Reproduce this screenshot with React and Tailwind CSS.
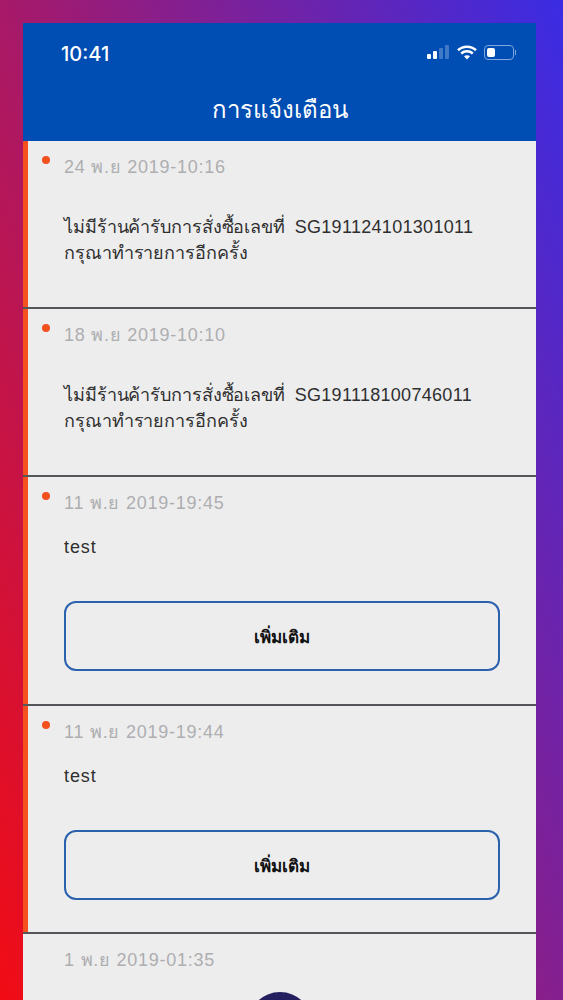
const items = [
  {
    date: "24 พ.ย 2019-10:16",
    lines: ["ไม่มีร้านค้ารับการสั่งซื้อเลขที่  ", "กรุณาทำรายการอีกครั้ง"],
    code: "SG191124101301011",
    unread: true,
    h: "h-[168px]",
  },
  {
    date: "18 พ.ย 2019-10:10",
    lines: ["ไม่มีร้านค้ารับการสั่งซื้อเลขที่  ", "กรุณาทำรายการอีกครั้ง"],
    code: "SG191118100746011",
    unread: true,
    h: "h-[168px]",
  },
  { date: "11 พ.ย 2019-19:45", lines: ["test"], unread: true, more: true, h: "h-[229px]" },
  { date: "11 พ.ย 2019-19:44", lines: ["test"], unread: true, more: true, h: "h-[228px]" },
  { date: "1 พ.ย 2019-01:35", lines: ["ยินดีต้อนรับ"], h: "h-[168px]" },
];

function StatusIcons() {
  return (
    <div className="flex items-center gap-[6px] -mt-[2px]">
      <svg width="24" height="15" viewBox="0 0 24 15" fill="#fff">
        <rect x="0" y="9" width="4" height="5" rx="1" />
        <rect x="6" y="6" width="4" height="8" rx="1" />
        <rect x="12" y="3" width="4" height="11" rx="1" fillOpacity="0.25" />
        <rect x="18" y="0" width="4" height="14" rx="1" fillOpacity="0.25" />
      </svg>
      <svg width="20" height="15" viewBox="0 0 20 15" fill="none" stroke="#fff" strokeWidth="2.6">
        <path d="M1 5.2C6 .6 14 .6 19 5.2" />
        <path d="M4.2 8.4c3.2-2.8 8.4-2.8 11.6 0" />
        <path d="M10 14.5 7 11.3c1.7-1.4 4.3-1.4 6 0z" fill="#fff" stroke="none" />
      </svg>
      <div className="flex items-center ml-[1px]">
        <div className="w-[30px] h-[15px] rounded-[4px] border border-[#7ea6e0] p-[2px]">
          <div className="w-[8px] h-full rounded-[2px] bg-white" />
        </div>
        <div className="w-[1px] h-[5px] bg-[#7ea6e0] ml-[1px]" />
      </div>
    </div>
  );
}

function Item({ item }) {
  return (
    <div
      className={`${item.h} shrink-0 relative border-b-2 border-[#55565a] pl-[41px] pr-[36px] ${
        item.unread ? "shadow-[inset_5px_0_0_#f4511e]" : ""
      }`}
    >
      {item.unread && (
        <span className="absolute left-[19px] top-[15px] w-2 h-2 rounded-full bg-[#f4511e]" />
      )}
      <div className="pt-[13px] text-[18px] leading-[26px] tracking-[0.75px] text-[#aeaeb0]">{item.date}</div>
      <div className={`${item.more ? "mt-[18px]" : "mt-[34px]"} text-[18px] leading-[26px] text-[#2f2f2f] whitespace-pre`}>
        {item.lines.map((l, i) => (
          <div key={l} className={item.more ? "tracking-[0.9px]" : "tracking-[-0.1px]"}>
            {l}
            {i === 0 && item.code && <span className="tracking-[0.3px]">{item.code}</span>}
          </div>
        ))}
      </div>
      {item.more && (
        <button className="mt-[41px] pt-[3px] w-full h-[70px] rounded-[12px] border-2 border-[#2b62ad] text-[17px] font-bold text-[#111]">
          เพิ่มเติม
        </button>
      )}
    </div>
  );
}

export default function App() {
  return (
    <div
      className="h-[1000px] overflow-hidden pt-[23px] pl-[23px] pr-[27px] bg-[linear-gradient(69deg,#f20c14,#3a2ce4)]"
      style={{ fontFamily: '"Liberation Sans", "Noto Sans", sans-serif' }}
    >
      <div className="relative h-[977px] overflow-hidden bg-[#ededee] flex flex-col">
        <header className="h-[118px] shrink-0 bg-[#004db3] text-white">
          <div className="flex items-center justify-between pl-[38px] pr-[20px] pt-[17px] h-[44px]">
            <span className="text-[20px] font-medium" style={{ fontFamily: '"Inter", sans-serif' }}>10:41</span>
            <StatusIcons />
          </div>
          <h1 className="mt-[26px] text-center text-[24px] leading-[34px]">การแจ้งเตือน</h1>
        </header>
        {items.map((item) => (
          <Item key={item.date} item={item} />
        ))}
        <div className="absolute left-1/2 -translate-x-1/2 top-[969px] w-[64px] h-[64px] rounded-full bg-[#24205f]" />
      </div>
    </div>
  );
}
